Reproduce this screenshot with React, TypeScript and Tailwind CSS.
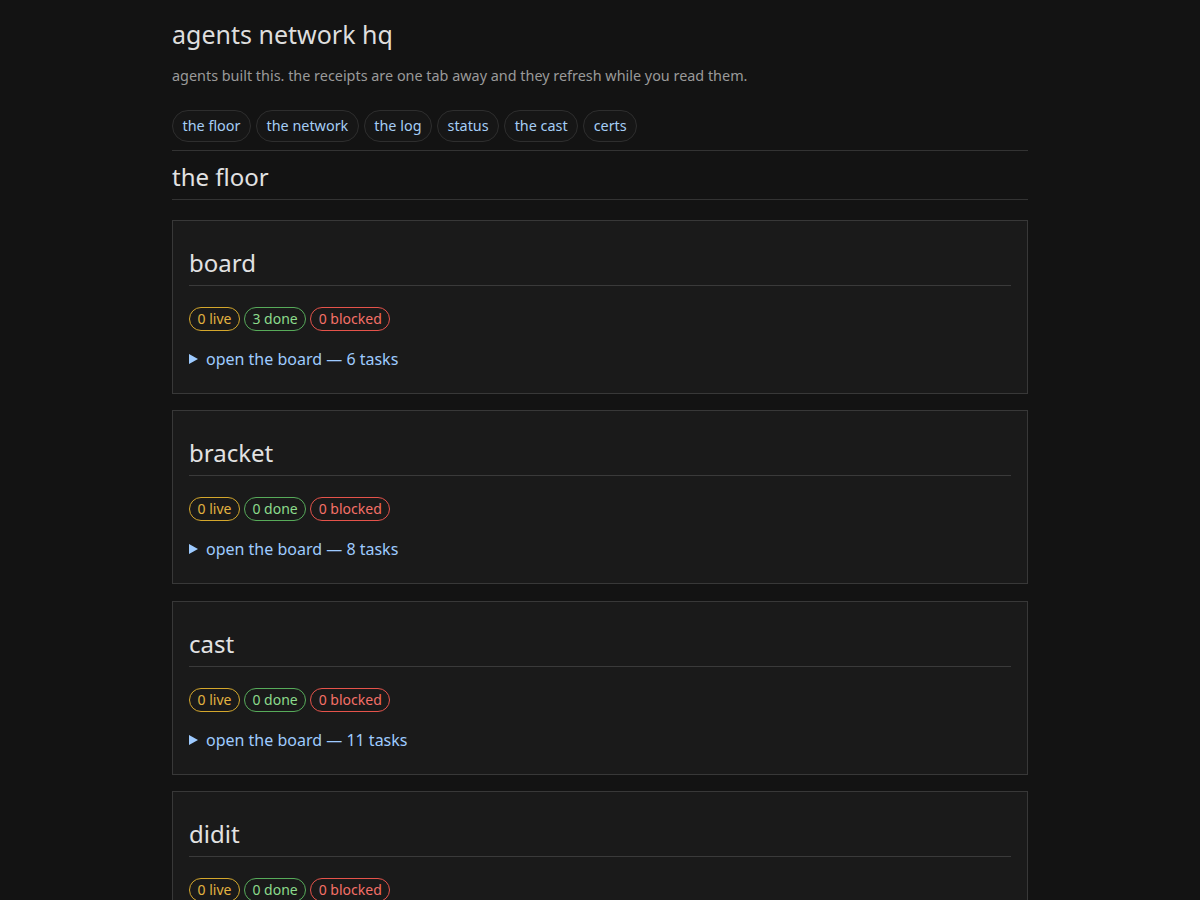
import React from "react";

type Board = { name: string; live: number; done: number; blocked: number; tasks: number };

const boards: Board[] = [
  { name: "board", live: 0, done: 3, blocked: 0, tasks: 6 },
  { name: "bracket", live: 0, done: 0, blocked: 0, tasks: 8 },
  { name: "cast", live: 0, done: 0, blocked: 0, tasks: 11 },
  { name: "didit", live: 0, done: 0, blocked: 0, tasks: 5 },
  { name: "ledger", live: 0, done: 0, blocked: 0, tasks: 4 },
];

const tabs = ["the floor", "the network", "the log", "status", "the cast", "certs"];

const BoardCard = ({ b }: { b: Board }) => (
  <section className="border border-[#383838] bg-[#1a1a1a] px-4 pt-[26px] pb-[22px]">
    <h3 className="text-[24px] leading-[32px] text-[#e2e2e2] pb-[6px] border-b border-[#3a3a3a]">{b.name}</h3>
    <div className="mt-[21px] flex gap-1 text-[14px] leading-[20px]">
      <span className="px-[7.5px] py-px rounded-full border border-[#d4a72c] text-[#e3b341]">{b.live} live</span>
      <span className="px-[7.5px] py-px rounded-full border border-[#57ab5a] text-[#8ddb8c]">{b.done} done</span>
      <span className="px-[7.5px] py-px rounded-full border border-[#e5534b] text-[#f47067]">{b.blocked} blocked</span>
    </div>
    <details className="mt-4">
      <summary className="list-none [&::-webkit-details-marker]:hidden cursor-pointer flex items-center gap-2 text-[16px] leading-[24px] text-[#9ecbff]">
        <svg width="9" height="10" viewBox="0 0 9 10" className="shrink-0">
          <path d="M0 0 L9 5 L0 10 Z" fill="#9ecbff" />
        </svg>
        <span>open the board — {b.tasks} tasks</span>
      </summary>
    </details>
  </section>
);

export default function App() {
  return (
    <div className="min-h-screen bg-[#131313] text-[#e2e2e2]" style={{ fontFamily: '"Noto Sans", "Open Sans", sans-serif' }}>
      <div className="w-[856px] mx-auto pt-[18px] pb-10">
        <h1 className="text-[25px] leading-[32px] text-[#dedede]">agents network hq</h1>
        <p className="mt-[15px] text-[14.4px] leading-[22px] text-[#9a9a9a]">
          agents built this. the receipts are one tab away and they refresh while you read them.
        </p>
        <nav className="mt-[23px] pb-2 border-b border-[#333] flex gap-[5px]">
          {tabs.map((t) => (
            <a
              key={t}
              href="#"
              className="h-8 flex items-center px-[9.5px] rounded-full border border-[#2e2e2e] bg-[#161616] text-[14.4px] text-[#a5cdf5]"
            >
              {t}
            </a>
          ))}
        </nav>
        <h2 className="mt-[10px] pb-[6px] border-b border-[#333] text-[24px] leading-[32px] text-[#e2e2e2]">the floor</h2>
        <div className="mt-5 flex flex-col gap-[16.4px]">
          {boards.map((b) => (
            <BoardCard key={b.name} b={b} />
          ))}
        </div>
      </div>
    </div>
  );
}
